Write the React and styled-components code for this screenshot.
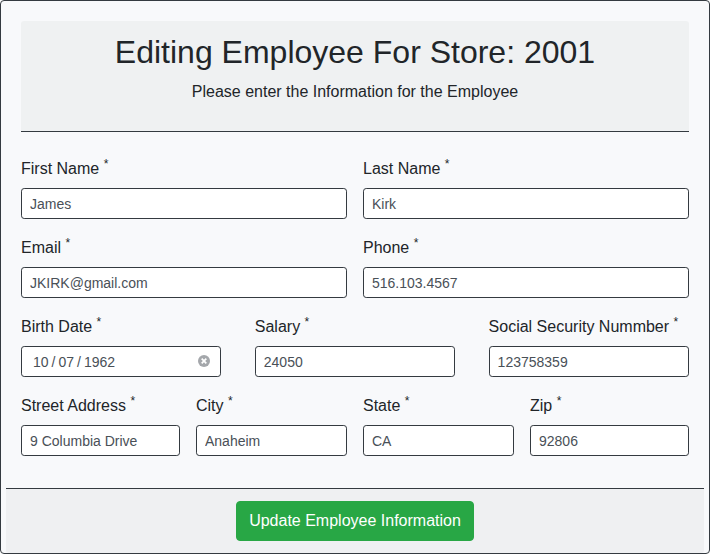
import React from "react";
import styled, { createGlobalStyle } from "styled-components";

const GlobalStyle = createGlobalStyle`
  *, *::before, *::after { box-sizing: border-box; }
  body {
    margin: 0;
    background: #fff;
    color: #212529;
    font-family: "Liberation Sans", Arial, sans-serif;
    font-size: 16px;
    line-height: 1.5;
  }
`;

const Card = styled.form`
  display: flex;
  flex-direction: column;
  height: 554px;
  border: 1px solid #343a40;
  border-radius: 4px;
  background: #f8f9fb;
`;

const Body = styled.div`
  flex: 1;
  padding: 20px 20px 0;
`;

const Header = styled.header`
  margin-bottom: 24px;
  padding: 12px 20px;
  border-bottom: 1px solid #343a40;
  border-radius: 3px 3px 0 0;
  background: #eff1f2;
  text-align: center;
`;

const Title = styled.h2`
  margin: 0 0 9px;
  font-size: 32px;
  font-weight: 500;
  line-height: 1.2;
`;

const Subtitle = styled.p`
  margin: 0 0 15px;
`;

const Row = styled.div`
  display: grid;
  grid-template-columns: ${(p) => p.$columns};
  column-gap: 16px;
  justify-content: space-between;
  margin-bottom: 16px;
`;

const FieldGroup = styled.div`
  min-width: 0;
`;

const Label = styled.label`
  display: block;
  height: 25px;
  padding-top: 1px;
  margin-bottom: 7px;
  white-space: nowrap;
`;

const Required = styled.sup`
  position: relative;
  top: -0.5em;
  font-size: 12px;
  line-height: 0;
  vertical-align: baseline;
`;

const Input = styled.input`
  display: block;
  width: 100%;
  height: 31px;
  padding: 4px 8px;
  border: 1px solid #343a40;
  border-radius: 3.2px;
  background: #fff;
  color: #495057;
  font: 14px/1.5 "Liberation Sans", Arial, sans-serif;
  outline: none;
`;

const DateBox = styled.div`
  display: flex;
  align-items: center;
  justify-content: space-between;
  height: 31px;
  padding: 0 10px 0 11px;
  border: 1px solid #343a40;
  border-radius: 3.2px;
  background: #fff;
  color: #495057;
  font-size: 14px;
`;

const DateParts = styled.span`
  display: flex;
  gap: 3px;
  padding-top: 2px;
`;

const ClearIcon = styled.svg`
  display: block;
  width: 12px;
  height: 12px;
  margin-top: -1px;
`;

const Footer = styled.footer`
  display: flex;
  justify-content: center;
  align-items: flex-start;
  height: 65px;
  margin: 0 5px;
  padding: 12px 20px;
  border-top: 1px solid #343a40;
  border-radius: 0 0 3px 3px;
  background: #eff0f2;
`;

const SubmitButton = styled.button`
  height: 40px;
  width: 238px;
  padding: 0;
  border: 1px solid #28a745;
  border-radius: 4px;
  background: #28a745;
  color: #fff;
  font: 16px/24px "Liberation Sans", Arial, sans-serif;
  white-space: nowrap;
`;

function Field({ id, label, value, children }) {
  return (
    <FieldGroup>
      <Label htmlFor={id}>
        {label} <Required>*</Required>
      </Label>
      {children || <Input id={id} defaultValue={value} />}
    </FieldGroup>
  );
}

export default function App() {
  return (
    <>
      <GlobalStyle />
      <Card onSubmit={(e) => e.preventDefault()}>
        <Body>
          <Header>
            <Title>Editing Employee For Store: 2001</Title>
            <Subtitle>Please enter the Information for the Employee</Subtitle>
          </Header>
          <Row $columns="1fr 1fr">
            <Field id="first" label="First Name" value="James" />
            <Field id="last" label="Last Name" value="Kirk" />
          </Row>
          <Row $columns="1fr 1fr">
            <Field id="email" label="Email" value="JKIRK@gmail.com" />
            <Field id="phone" label="Phone" value="516.103.4567" />
          </Row>
          <Row $columns="200.4px 200.4px 200.4px">
            <Field id="birth" label="Birth Date">
              <DateBox id="birth">
                <DateParts>
                  <span>10</span>
                  <span>/</span>
                  <span>07</span>
                  <span>/</span>
                  <span>1962</span>
                </DateParts>
                <ClearIcon viewBox="0 0 12 12" aria-hidden="true">
                  <circle cx="6" cy="6" r="6" fill="#a4a7ab" />
                  <path d="M3.7 3.7 8.3 8.3M8.3 3.7 3.7 8.3" stroke="#fff" strokeWidth="1.7" />
                </ClearIcon>
              </DateBox>
            </Field>
            <Field id="salary" label="Salary" value="24050" />
            <Field id="ssn" label="Social Security Nummber" value="123758359" />
          </Row>
          <Row $columns="159px 151px 151px 159px">
            <Field id="street" label="Street Address" value="9 Columbia Drive" />
            <Field id="city" label="City" value="Anaheim" />
            <Field id="state" label="State" value="CA" />
            <Field id="zip" label="Zip" value="92806" />
          </Row>
        </Body>
        <Footer>
          <SubmitButton type="submit">Update Employee Information</SubmitButton>
        </Footer>
      </Card>
    </>
  );
}
